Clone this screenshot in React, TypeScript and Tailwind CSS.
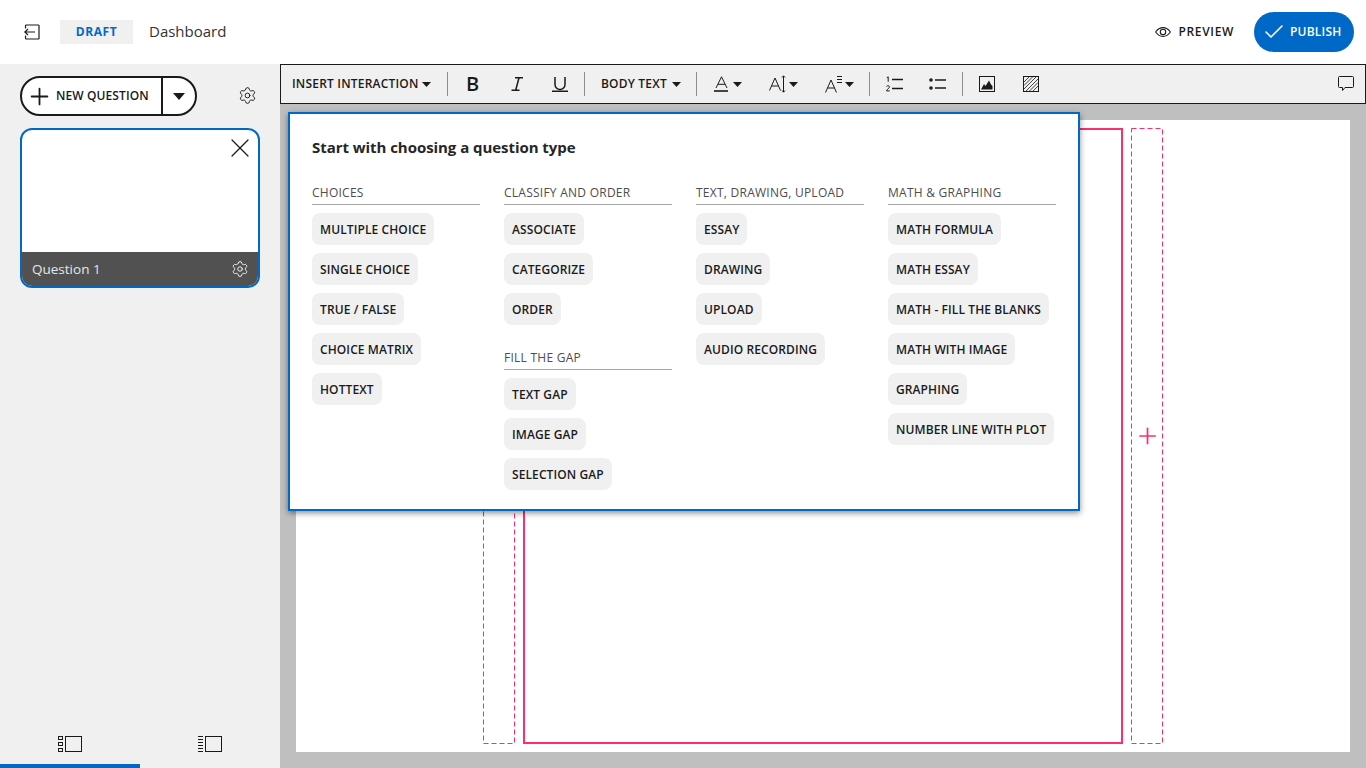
import { Check, Plus, Settings, X } from "lucide-react";

const columns = [
    [{ title: "CHOICES", items: ["MULTIPLE CHOICE", "SINGLE CHOICE", "TRUE / FALSE", "CHOICE MATRIX", "HOTTEXT"] }],
    [
        { title: "CLASSIFY AND ORDER", items: ["ASSOCIATE", "CATEGORIZE", "ORDER"] },
        { title: "FILL THE GAP", items: ["TEXT GAP", "IMAGE GAP", "SELECTION GAP"] },
    ],
    [{ title: "TEXT, DRAWING, UPLOAD", items: ["ESSAY", "DRAWING", "UPLOAD", "AUDIO RECORDING"] }],
    [{ title: "MATH & GRAPHING", items: ["MATH FORMULA", "MATH ESSAY", "MATH - FILL THE BLANKS", "MATH WITH IMAGE", "GRAPHING", "NUMBER LINE WITH PLOT"] }],
];

function Caret({ className = "" }: { className?: string }) {
    return (
        <svg width="9" height="5" viewBox="0 0 9 5" className={className}>
            <path d="M0 0h9L4.5 5z" fill="#1a1a1a" />
        </svg>
    );
}

function Divider() {
    return <div className="w-px h-6 bg-[#8c8c8c]" />;
}

function DashedBox({ height, children }: { height: number; children?: React.ReactNode }) {
    return (
        <div className="w-8 relative flex items-center justify-center">
            <svg width="32" height={height} className="absolute left-0 top-0">
                <rect x=".5" y=".5" width="31" height={height - 1} fill="none" stroke="#ff2d6b" strokeDasharray="5 3" />
            </svg>
            {children}
        </div>
    );
}

export default function App() {
    return (
        <div className="w-[1366px] h-[768px] overflow-hidden flex flex-col bg-white text-[#1a1a1a] font-['Open_Sans','Noto_Sans',sans-serif]">
            {/* top bar */}
            <header className="h-16 shrink-0 flex items-center pl-6 pr-3">
                <svg width="16" height="16" viewBox="0 0 16 16" fill="none" stroke="#1a1a1a" strokeWidth="1.2">
                    <path d="M1.5 4.5V2a1 1 0 0 1 1-1h12a.6.6 0 0 1 .5.6v12.8a.6.6 0 0 1-.5.6h-12a1 1 0 0 1-1-1v-2.5" />
                    <path d="M11 8H1M4 5 .8 8 4 11" />
                </svg>
                <div className="ml-5 w-[73px] h-6 bg-[#f0f0f0] flex items-center justify-center text-[12px] font-bold text-[#0069c8] tracking-[0.6px]">DRAFT</div>
                <div className="ml-4 mb-[2px] text-[15px] text-[#333333]">Dashboard</div>
                <div className="ml-auto flex items-center text-[12px] font-semibold tracking-[0.65px]">
                    <svg width="16" height="10" viewBox="0 0 16 10" fill="none" stroke="#1a1a1a" strokeWidth="1.1" className="mr-2">
                        <path d="M.6 5C3 1.600 5.500.6 8 .6s5 1 7.400 4.400C13 8.400 10.500 9.400 8 9.400S3 8.400.6 5z" />
                        <circle cx="8" cy="5" r="2.700" />
                    </svg>
                    PREVIEW
                </div>
                <div className="ml-5 w-[100px] h-10 rounded-full bg-[#0069c8] text-white flex items-center pl-2 text-[12px] font-semibold tracking-[0.2px]">
                    <Check className="w-6 h-6 mr-1" strokeWidth={1.6} />
                    PUBLISH
                </div>
            </header>

            <div className="flex-1 flex min-h-0">
                {/* sidebar */}
                <aside className="w-[280px] shrink-0 bg-[#f0f0f0] flex flex-col">
                    <div className="flex items-center pt-3 px-5">
                        <div className="w-[177px] h-10 rounded-full border-2 border-[#1a1a1a] bg-white flex items-center">
                            <Plus className="w-[27px] h-[27px] ml-[4px]" strokeWidth={1.6} />
                            <span className="ml-[3px] text-[12px] font-semibold tracking-[0.1px]">NEW QUESTION</span>
                            <div className="ml-auto w-[34px] h-full border-l-2 border-[#1a1a1a] flex items-center justify-center">
                                <svg width="12" height="7" viewBox="0 0 12 7"><path d="M0 0h12L6 7z" fill="#1a1a1a" /></svg>
                            </div>
                        </div>
                        <Settings className="w-[19px] h-[19px] ml-[41px] -translate-y-px" strokeWidth={1.2} />
                    </div>
                    <div className="mx-5 mt-3 h-40 rounded-[12px] border-2 border-[#0069c8] overflow-hidden flex flex-col bg-white">
                        <div className="flex-1 flex justify-end pt-[2px] pr-[2px]">
                            <X className="w-8 h-8" strokeWidth={0.9} />
                        </div>
                        <div className="h-[34px] bg-[#515151] flex items-center justify-between pl-[10px] pr-[9px] text-[13.5px]">
                            <span className="pt-px text-[#e6e6e6]">Question 1</span>
                            <Settings className="w-[18px] h-[18px] text-white" strokeWidth={1.2} />
                        </div>
                    </div>
                    <div className="mt-auto flex h-12">
                        <div className="w-[140px] border-b-4 border-[#0069c8] flex items-center justify-center pt-[3px]">
                            <svg width="24" height="16" viewBox="0 0 24 16" fill="none" stroke="#1a1a1a" strokeWidth="1">
                                <rect x="7.5" y=".5" width="16" height="15" />
                                <rect x=".5" y=".5" width="4" height="3" />
                                <rect x=".5" y="6.5" width="4" height="3" />
                                <rect x=".5" y="12.5" width="4" height="3" />
                            </svg>
                        </div>
                        <div className="w-[140px] flex items-center justify-center pb-[1px]">
                            <svg width="24" height="16" viewBox="0 0 24 16" fill="none" stroke="#1a1a1a" strokeWidth="1">
                                <rect x="7.5" y=".5" width="16" height="15" />
                                <path d="M0 .5h5M0 3.5h5M0 6.5h5M0 9.5h5M0 12.5h5M0 15.5h5" />
                            </svg>
                        </div>
                    </div>
                </aside>

                <main className="flex-1 min-w-0 flex flex-col bg-[#bfbfbf] relative">
                    {/* toolbar */}
                    <div className="h-10 shrink-0 border border-[#1a1a1a] bg-[#f0f0f0] flex items-center pl-[10px] pr-[11px]">
                        <span className="ml-px w-[127px] text-[12px] font-semibold tracking-[0.2px] whitespace-nowrap">INSERT INTERACTION</span>
                        <Caret className="ml-[3px]" />
                        <div className="ml-[16px]"><Divider /></div>
                        <span className="ml-[18px] w-[14px] text-[20px] leading-none font-semibold">B</span>
                        <svg width="14" height="14" viewBox="0 0 14 14" className="ml-[30px]" fill="none" stroke="#1a1a1a" strokeWidth="1.5">
                            <path d="M1.5 13.2h8M5 .8h8M9 .8 5.7 13.2" />
                        </svg>
                        <svg width="16" height="15" viewBox="0 0 16 15" className="ml-[28px]" fill="none" stroke="#1a1a1a" strokeWidth="1.5">
                            <path d="M3 0v7.5a5 5 0 0 0 10 0V0M0 14.2h16" />
                        </svg>
                        <div className="ml-[16px]"><Divider /></div>
                        <span className="ml-[16px] w-[67px] text-[12px] font-semibold tracking-[0.2px] whitespace-nowrap">BODY TEXT</span>
                        <Caret className="ml-[4px]" />
                        <div className="ml-[15px]"><Divider /></div>
                        <svg width="15" height="16" viewBox="0 0 15 16" className="ml-[17px]" fill="none" stroke="#1a1a1a">
                            <path d="M2 12 7.5 .8 13 12M4 8.3h7" strokeWidth="1" />
                            <path d="M0 15h14" strokeWidth="1.6" />
                        </svg>
                        <Caret className="ml-[4px]" />
                        <svg width="20" height="18" viewBox="0 0 20 18" className="ml-[27px]" fill="none" stroke="#1a1a1a" strokeWidth="1">
                            <path d="M.5 15.5 6 3l5.5 12.5M2.5 11h7M14.5 1v16M13 2.5 14.5.8 16 2.5M13 15.5l1.5 1.7 1.5-1.7" />
                        </svg>
                        <Caret />
                        <svg width="17" height="18" viewBox="0 0 17 18" className="ml-[27px]" fill="none" stroke="#1a1a1a" strokeWidth="1">
                            <path d="M.5 17.5 6 5l5.5 12.5M2.5 13h7M12 1.5h5M12 4.5h5M12 7.5h5" />
                        </svg>
                        <Caret className="ml-[3px]" />
                        <div className="ml-[15px]"><Divider /></div>
                        <svg width="17" height="16" viewBox="0 0 17 16" className="ml-[16px]" fill="none" stroke="#1a1a1a">
                            <path d="M6 3.5h11M6 12.5h11" strokeWidth="1.4" />
                            <path d="M.8 1.8 2.2.8v5" strokeWidth="1" />
                            <path d="M.5 10.5c.5-1.2 3-1 3 .4 0 1-2.6 2.6-3 4h3.2" strokeWidth="1" />
                        </svg>
                        <svg width="17" height="12" viewBox="0 0 17 12" className="ml-[26px]" fill="none" stroke="#1a1a1a">
                            <circle cx="2" cy="2" r="1.8" fill="#1a1a1a" stroke="none" />
                            <circle cx="2" cy="10" r="1.8" fill="#1a1a1a" stroke="none" />
                            <path d="M6 2h11M6 10h11" strokeWidth="1.4" />
                        </svg>
                        <div className="ml-[16px]"><Divider /></div>
                        <svg width="16" height="16" viewBox="0 0 16 16" className="ml-[16px]" fill="none" stroke="#1a1a1a">
                            <rect x=".5" y=".5" width="15" height="15" />
                            <path d="M2 13.5 5 8l1.5 2L10 4.500l2 4 1.500 1.500v3.500z" fill="#1a1a1a" stroke="none" />
                        </svg>
                        <svg width="16" height="16" viewBox="0 0 16 16" className="ml-[28px]" fill="none" stroke="#1a1a1a">
                            <rect x=".5" y=".5" width="15" height="15" />
                            <path d="M1 6 6 1M1 9.500 9.500 1M1 13 13 1M3 15 15 3M6.500 15 15 6.500M10 15l5-5" strokeWidth=".8" />
                        </svg>
                        <svg width="16" height="16" viewBox="0 0 16 16" className="ml-auto" fill="none" stroke="#1a1a1a" strokeWidth="1">
                            <path d="M1.500.5h13a1 1 0 0 1 1 1v9a1 1 0 0 1-1 1H7l-2.500 3v-3h-3a1 1 0 0 1-1-1v-9a1 1 0 0 1 1-1z" />
                        </svg>
                    </div>

                    {/* page */}
                    <div className="flex-1 min-h-0 p-4">
                        <div className="h-full bg-white flex gap-2 py-2 pl-[187px]">
                            <DashedBox height={616} />
                            <div className="w-[600px] border-2 border-[#ff2d6b]" />
                            <DashedBox height={616}>
                                <Plus className="relative w-[27px] h-[27px] pb-px text-[#ff2d6b]" strokeWidth={1.6} />
                            </DashedBox>
                        </div>
                    </div>

                    {/* question type popup */}
                    <div className="absolute left-2 top-12 w-[792px] h-[399px] bg-white border-2 border-[#0069c8] shadow-[0_2px_6px_rgba(0,0,0,0.45)] pt-[22px] px-[22px]">
                        <h2 className="text-[15px] leading-[22px] font-bold text-[#262626] tracking-[-0.05px]">Start with choosing a question type</h2>
                        <div className="mt-6 grid grid-cols-4 gap-6">
                            {columns.map((groups, i) => (
                                <div key={i} className="flex flex-col gap-[22px]">
                                    {groups.map((group) => (
                                        <div key={group.title}>
                                            <div className="h-[23px] border-b border-[#a6a6a6] pt-px text-[12px] leading-[20px] text-[#4d4d4d] tracking-[0.25px]">{group.title}</div>
                                            <div className="mt-2 flex flex-col items-start gap-2">
                                                {group.items.map((item) => (
                                                    <div key={item} className="h-8 px-2 pt-px rounded-lg bg-[#f0f0f0] flex items-center text-[12px] font-semibold tracking-[0.1px] whitespace-nowrap">
                                                        {item}
                                                    </div>
                                                ))}
                                            </div>
                                        </div>
                                    ))}
                                </div>
                            ))}
                        </div>
                    </div>
                </main>
            </div>
        </div>
    );
}
